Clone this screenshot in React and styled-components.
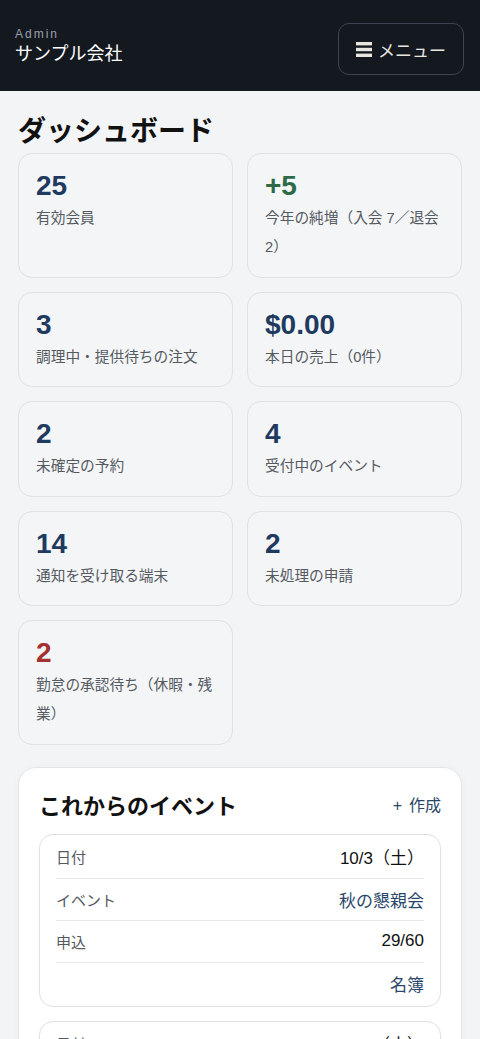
import React from "react";
import styled, { createGlobalStyle } from "styled-components";

const Global = createGlobalStyle`
  * { box-sizing: border-box; }
  html, body { margin: 0; padding: 0; }
  body {
    background: #f3f4f6;
    font-family: "Liberation Sans", "Noto Sans CJK JP", sans-serif;
    color: #111;
  }
`;

const Header = styled.header`
  height: 91px;
  background: #14181f;
  display: flex;
  align-items: center;
  justify-content: space-between;
  padding: 0 16px 0 15px;
`;

const Brand = styled.div`
  display: flex;
  flex-direction: column;
`;

const BrandSub = styled.span`
  font-size: 12px;
  line-height: 16px;
  letter-spacing: 2px;
  color: #9aa1ab;
`;

const BrandName = styled.span`
  font-size: 18px;
  line-height: 24px;
  color: #ffffff;
`;

const MenuButton = styled.button`
  height: 52px;
  width: 126px;
  margin-top: 7px;
  display: flex;
  align-items: center;
  justify-content: center;
  gap: 6px;
  background: transparent;
  border: 1px solid #3d4450;
  border-radius: 11px;
  color: #e8e6e1;
  font-family: inherit;
  font-size: 17px;
  padding: 0;
`;

const Main = styled.main`
  padding: 0 18px 40px;
`;

const Title = styled.h1`
  margin: 0;
  padding: 23px 0 3px;
  font-size: 28px;
  line-height: 36px;
  font-weight: 700;
  color: #111;
`;

const StatGrid = styled.div`
  display: grid;
  grid-template-columns: 1fr 1fr;
  gap: 14px;
`;

const StatCard = styled.div`
  border: 1px solid #dfe1e5;
  border-radius: 14px;
  background: #f4f5f7;
  padding: 14px 17px 14.5px;
`;

const tones = {
  navy: "#1f3a5f",
  green: "#2c6a48",
  red: "#a33131",
};

const StatValue = styled.div`
  font-size: 28px;
  line-height: 36px;
  font-weight: 700;
  color: ${(p) => tones[p.$tone] || tones.navy};
`;

const StatLabel = styled.div`
  font-size: 14.7px;
  line-height: 29px;
  color: #555a61;
`;

const Panel = styled.section`
  margin-top: 22px;
  background: #ffffff;
  border: 1px solid #e3e5e9;
  border-radius: 18px;
  box-shadow: 0 2px 8px rgba(0, 0, 0, 0.04);
  padding: 19px 20px 20px;
`;

const PanelHead = styled.div`
  display: flex;
  align-items: center;
  justify-content: space-between;
  height: 34px;
  margin-bottom: 13px;
`;

const PanelTitle = styled.h2`
  margin: 0;
  font-size: 22px;
  font-weight: 700;
  color: #111;
`;

const LinkText = styled.a`
  color: #2a4769;
  text-decoration: none;
  font-size: ${(p) => p.$size || "17px"};
  margin-left: ${(p) => (p.$push ? "auto" : "0")};
`;

const Plus = styled.span`
  margin-right: 7px;
`;

const EventList = styled.div`
  display: flex;
  flex-direction: column;
  gap: 14px;
`;

const EventCard = styled.div`
  border: 1px solid #dde0e5;
  border-radius: 14px;
  padding: 1px 16px 2px;
`;

const Row = styled.div`
  height: 42px;
  display: flex;
  align-items: center;
  justify-content: space-between;
  border-top: ${(p) => (p.$first ? "none" : "1px solid #e6e8eb")};
`;

const RowLabel = styled.span`
  font-size: 15px;
  color: #555a61;
`;

const RowValue = styled.span`
  font-size: 17px;
  color: #111;
  margin-left: auto;
`;

const MenuIcon = () => (
  <svg width="16" height="15" viewBox="0 0 16 15" aria-hidden="true">
    <rect x="0" y="0" width="16" height="3.4" fill="currentColor" />
    <rect x="0" y="5.8" width="16" height="3.4" fill="currentColor" />
    <rect x="0" y="11.6" width="16" height="3.4" fill="currentColor" />
  </svg>
);

const stats = [
  { value: "25", label: "有効会員" },
  { value: "+5", label: "今年の純増（入会 7／退会 2）", tone: "green" },
  { value: "3", label: "調理中・提供待ちの注文" },
  { value: "$0.00", label: "本日の売上（0件）" },
  { value: "2", label: "未確定の予約" },
  { value: "4", label: "受付中のイベント" },
  { value: "14", label: "通知を受け取る端末" },
  { value: "2", label: "未処理の申請" },
  { value: "2", label: "勤怠の承認待ち（休暇・残業）", tone: "red" },
];

const events = [
  { date: "10/3（土）", name: "秋の懇親会", apply: "29/60" },
  { date: "10/17（土）", name: "新人歓迎会", apply: "12/40" },
];

export default function App() {
  return (
    <>
      <Global />
      <Header>
        <Brand>
          <BrandSub>Admin</BrandSub>
          <BrandName>サンプル会社</BrandName>
        </Brand>
        <MenuButton>
          <MenuIcon />
          メニュー
        </MenuButton>
      </Header>
      <Main>
        <Title>ダッシュボード</Title>
        <StatGrid>
          {stats.map((s, i) => (
            <StatCard key={i}>
              <StatValue $tone={s.tone}>{s.value}</StatValue>
              <StatLabel>{s.label}</StatLabel>
            </StatCard>
          ))}
        </StatGrid>
        <Panel>
          <PanelHead>
            <PanelTitle>これからのイベント</PanelTitle>
            <LinkText href="#" $size="16px">
              <Plus>+</Plus>作成
            </LinkText>
          </PanelHead>
          <EventList>
            {events.map((e, i) => (
              <EventCard key={i}>
                <Row $first>
                  <RowLabel>日付</RowLabel>
                  <RowValue>{e.date}</RowValue>
                </Row>
                <Row>
                  <RowLabel>イベント</RowLabel>
                  <LinkText href="#">{e.name}</LinkText>
                </Row>
                <Row>
                  <RowLabel>申込</RowLabel>
                  <RowValue>{e.apply}</RowValue>
                </Row>
                <Row>
                  <LinkText href="#" $push>名簿</LinkText>
                </Row>
              </EventCard>
            ))}
          </EventList>
        </Panel>
      </Main>
    </>
  );
}
